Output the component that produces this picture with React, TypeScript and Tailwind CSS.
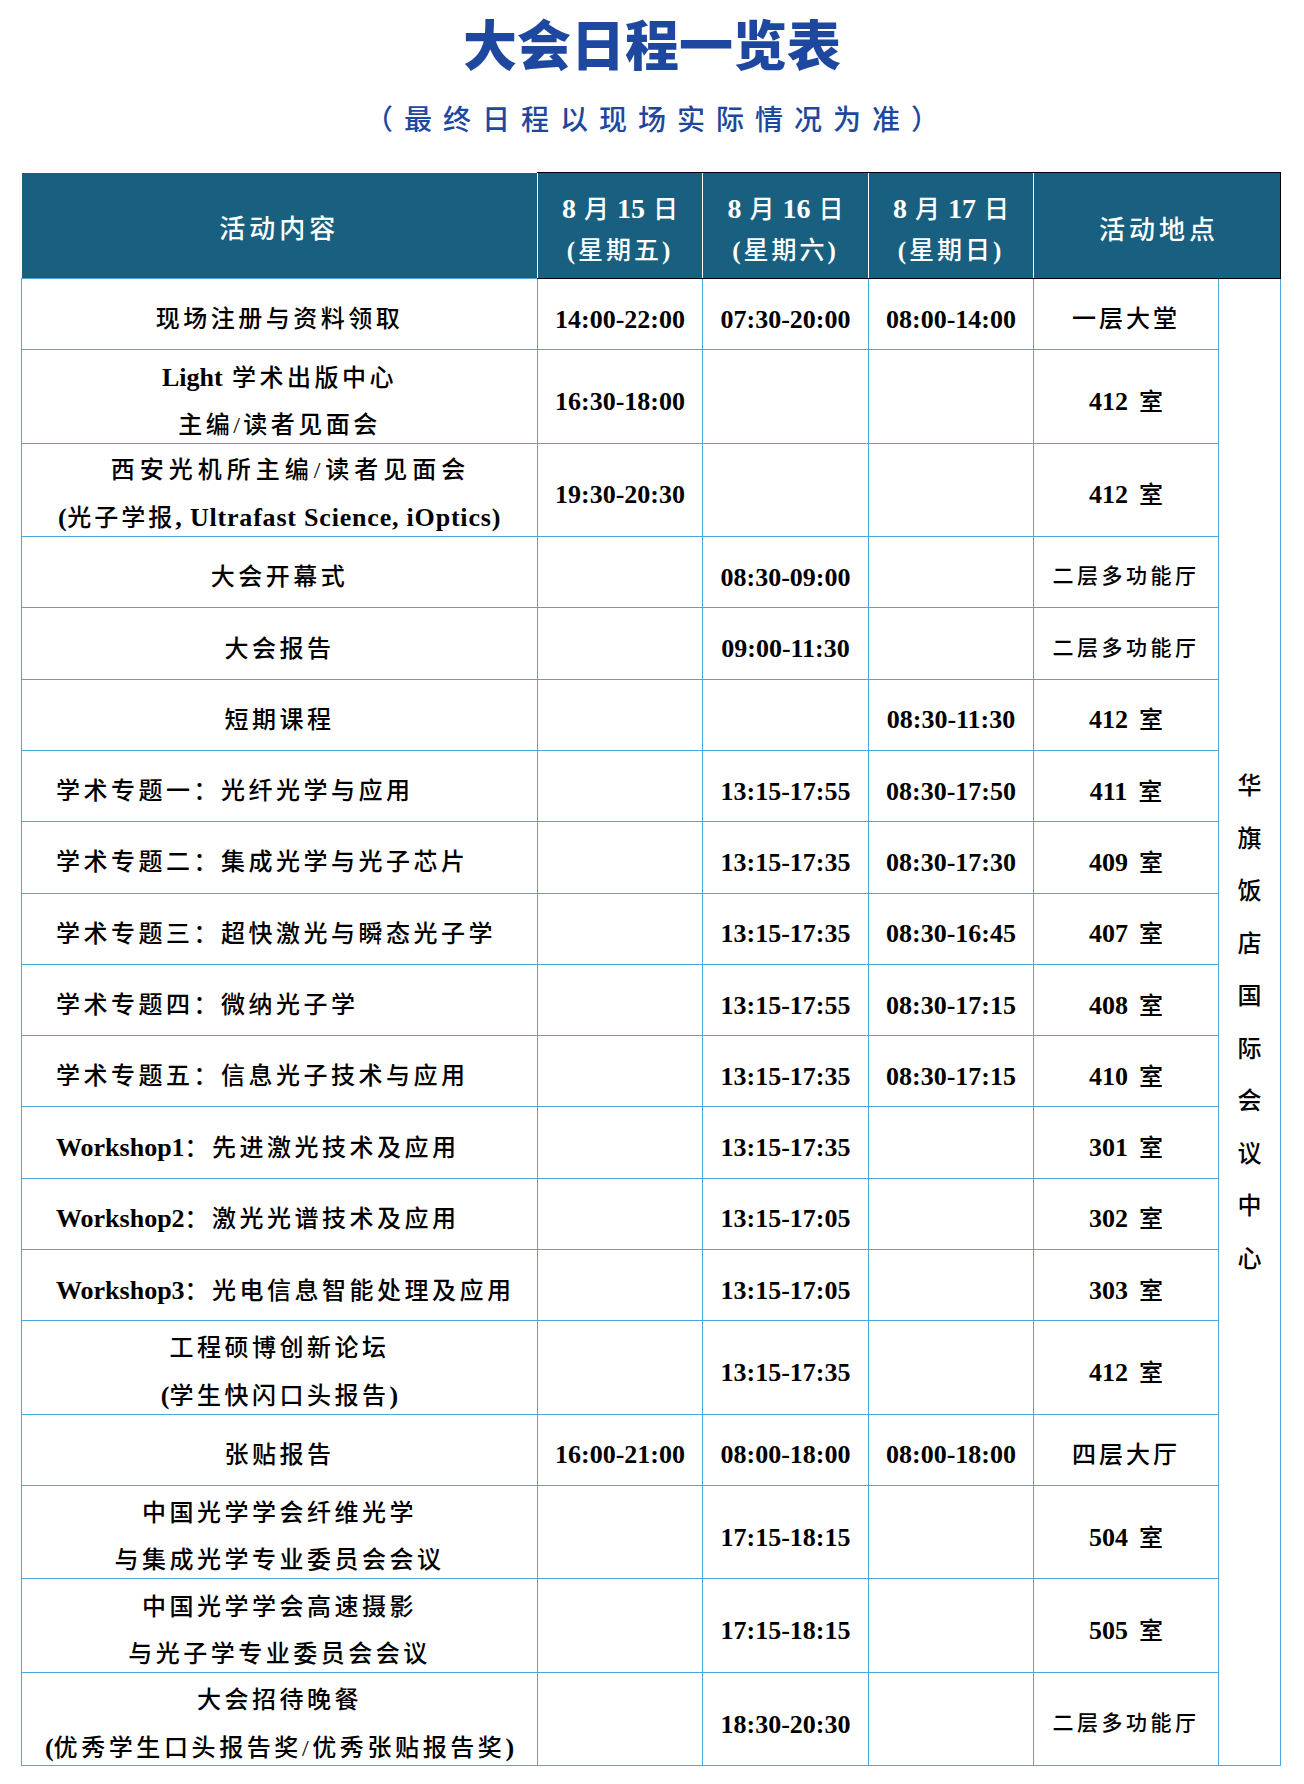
import React from 'react';

type Row = {
    act: React.ReactNode;
    left?: boolean;
    two?: boolean;
    d1?: string;
    d2?: string;
    d3?: string;
    loc: React.ReactNode;
};

const line = 'border border-[#4aa8e0]';

// bold latin text inside the chinese lines
const L = ({ t, wide }: { t: string; wide?: boolean }) => (
    <span className={`text-[26px] font-bold ${wide ? 'tracking-[0.8px]' : 'tracking-normal'}`}>{t}</span>
);

const Room = ({ n }: { n: string }) => (
    <>
        <span className="text-[26px] font-bold">{n}</span>
        <span className="ml-[11px] text-[24px]">室</span>
    </>
);

const Hall = ({ t }: { t: string }) => <span className="text-[21px] tracking-[3.5px]">{t}</span>;

const rows: Row[] = [
    { act: '现场注册与资料领取', d1: '14:00-22:00', d2: '07:30-20:00', d3: '08:00-14:00', loc: <span className="text-[24px] tracking-[3px]">一层大堂</span> },
    {
        act: (
            <>
                <div>
                    <L t="Light" /> 学术出版中心
                </div>
                <div>主编/读者见面会</div>
            </>
        ),
        two: true,
        d1: '16:30-18:00',
        loc: <Room n="412" />,
    },
    {
        act: (
            <>
                <div className="pl-[22px] tracking-[5px]">西安光机所主编/读者见面会</div>
                <div className="tracking-[3px]">
                    <L t="(" wide />光子学报<L t=", Ultrafast Science, iOptics)" wide />
                </div>
            </>
        ),
        two: true,
        d1: '19:30-20:30',
        loc: <Room n="412" />,
    },
    { act: '大会开幕式', d2: '08:30-09:00', loc: <Hall t="二层多功能厅" /> },
    { act: '大会报告', d2: '09:00-11:30', loc: <Hall t="二层多功能厅" /> },
    { act: '短期课程', d3: '08:30-11:30', loc: <Room n="412" /> },
    { act: '学术专题一：光纤光学与应用', left: true, d2: '13:15-17:55', d3: '08:30-17:50', loc: <Room n="411" /> },
    { act: '学术专题二：集成光学与光子芯片', left: true, d2: '13:15-17:35', d3: '08:30-17:30', loc: <Room n="409" /> },
    { act: '学术专题三：超快激光与瞬态光子学', left: true, d2: '13:15-17:35', d3: '08:30-16:45', loc: <Room n="407" /> },
    { act: '学术专题四：微纳光子学', left: true, d2: '13:15-17:55', d3: '08:30-17:15', loc: <Room n="408" /> },
    { act: '学术专题五：信息光子技术与应用', left: true, d2: '13:15-17:35', d3: '08:30-17:15', loc: <Room n="410" /> },
    { act: <><L t="Workshop1" />：先进激光技术及应用</>, left: true, d2: '13:15-17:35', loc: <Room n="301" /> },
    { act: <><L t="Workshop2" />：激光光谱技术及应用</>, left: true, d2: '13:15-17:05', loc: <Room n="302" /> },
    { act: <><L t="Workshop3" />：光电信息智能处理及应用</>, left: true, d2: '13:15-17:05', loc: <Room n="303" /> },
    {
        act: (
            <>
                <div>工程硕博创新论坛</div>
                <div>
                    <L t="(" />学生快闪口头报告<L t=")" />
                </div>
            </>
        ),
        two: true,
        d2: '13:15-17:35',
        loc: <Room n="412" />,
    },
    { act: '张贴报告', d1: '16:00-21:00', d2: '08:00-18:00', d3: '08:00-18:00', loc: <span className="text-[24px] tracking-[3px]">四层大厅</span> },
    {
        act: (
            <>
                <div>中国光学学会纤维光学</div>
                <div>与集成光学专业委员会会议</div>
            </>
        ),
        two: true,
        d2: '17:15-18:15',
        loc: <Room n="504" />,
    },
    {
        act: (
            <>
                <div>中国光学学会高速摄影</div>
                <div>与光子学专业委员会会议</div>
            </>
        ),
        two: true,
        d2: '17:15-18:15',
        loc: <Room n="505" />,
    },
    {
        act: (
            <>
                <div>大会招待晚餐</div>
                <div className="tracking-[3.6px]">
                    <L t="(" />优秀学生口头报告奖/优秀张贴报告奖<L t=")" />
                </div>
            </>
        ),
        two: true,
        d2: '18:30-20:30',
        loc: <Hall t="二层多功能厅" />,
    },
];

const venue = '华旗饭店国际会议中心';

function DateHead({ day, week }: { day: string; week: string }) {
    return (
        <th className="border-y border-l border-y-black border-l-white p-0 pt-[9px] align-middle font-normal leading-[38px] text-white">
            <div>
                <span className="text-[28px] font-bold">8</span>
                <span className="mx-[8px] text-[25px] font-medium">月</span>
                <span className="text-[28px] font-bold">{day}</span>
                <span className="ml-[8px] text-[25px] font-medium">日</span>
            </div>
            <div className="text-[25px] font-medium tracking-[3px]">
                <span className="font-bold">(</span>星期{week}<span className="font-bold">)</span>
            </div>
        </th>
    );
}

export default function App() {
    return (
        <div className="w-[1304px] bg-white font-['Liberation_Serif','Noto_Sans_CJK_SC',serif] text-black">
            {/* Title */}
            <div className="flex h-[84px] items-center justify-center font-['Noto_Sans_CJK_SC',sans-serif] text-[54px] font-black text-[#1e48a0]">
                大会日程一览表
            </div>
            <div className="flex h-[68px] items-center justify-center pl-[11px] font-['Noto_Sans_CJK_SC',sans-serif] text-[28px] font-medium tracking-[11px] text-[#1e48a0]">
                （最终日程以现场实际情况为准）
            </div>

            <table className="mt-[20px] ml-[21px] w-[1259px] table-fixed border-collapse font-medium">
                <colgroup>
                    <col className="w-[516px]" />
                    <col className="w-[165px]" />
                    <col className="w-[166px]" />
                    <col className="w-[165px]" />
                    <col className="w-[185px]" />
                    <col className="w-[62px]" />
                </colgroup>
                <thead>
                    <tr className="h-[106px] bg-[#185f80]">
                        <th className="p-0 pt-[9px] align-middle text-[26px] font-medium tracking-[4px] text-white">活动内容</th>
                        <DateHead day="15" week="五" />
                        <DateHead day="16" week="六" />
                        <DateHead day="17" week="日" />
                        <th
                            colSpan={2}
                            className="border-y border-r border-l border-y-black border-r-black border-l-white p-0 pt-[9px] pl-[4px] align-middle text-[26px] font-medium tracking-[4px] text-white"
                        >
                            活动地点
                        </th>
                    </tr>
                </thead>
                <tbody>
                    {rows.map((r, i) => (
                        <tr key={i} className={r.two ? 'h-[93.4px]' : 'h-[71.3px]'}>
                            <td
                                className={`${line} p-0 pt-[10px] align-middle text-[24px] tracking-[3.5px] ${
                                    r.left ? 'pl-[34px] text-left' : 'text-center'
                                }`}
                            >
                                {r.two ? <div className="flex h-[70px] flex-col justify-center leading-[47px]">{r.act}</div> : r.act}
                            </td>
                            {[r.d1, r.d2, r.d3].map((d, j) => (
                                <td key={j} className={`${line} p-0 pt-[10px] text-center align-middle text-[26px] font-bold`}>
                                    {d}
                                </td>
                            ))}
                            <td className={`${line} p-0 pt-[10px] text-center align-middle`}>{r.loc}</td>
                            {i === 0 && (
                                <td rowSpan={rows.length} className={`${line} p-0 pt-[1px] align-middle`}>
                                    <div className="flex flex-col items-center">
                                        {venue.split('').map((c) => (
                                            <div key={c} className="flex h-[52.5px] items-center text-[24px]">
                                                {c}
                                            </div>
                                        ))}
                                    </div>
                                </td>
                            )}
                        </tr>
                    ))}
                </tbody>
            </table>
        </div>
    );
}
